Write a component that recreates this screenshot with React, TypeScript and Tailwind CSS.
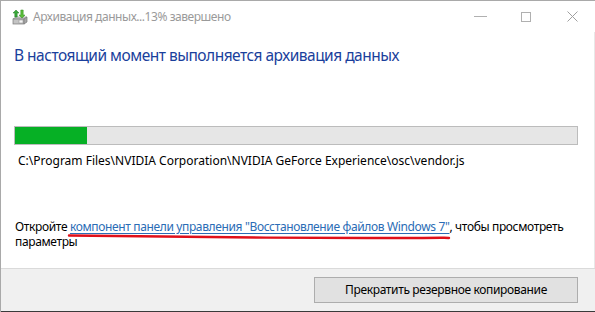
import React from 'react';

function BackupIcon() {
  return (
    <svg width="18" height="18" viewBox="0 0 18 18">
      {/* drive box */}
      <path d="M2 11 L5 9 L16 9 L13 11 Z" fill="#d8d8d8" stroke="#8a8a8a" strokeWidth="0.7" />
      <rect x="2" y="11" width="11" height="5" fill="#c4c4c4" stroke="#7a7a7a" strokeWidth="0.7" />
      <path d="M13 11 L16 9 L16 14 L13 16 Z" fill="#a8a8a8" stroke="#7a7a7a" strokeWidth="0.7" />
      <rect x="8" y="12" width="4" height="3" fill="#f4f4f4" stroke="#8a8a8a" strokeWidth="0.5" />
      {/* green arrows */}
      <path d="M5 2 L8 5 L6.2 5 L6.2 9 L3.8 9 L3.8 5 L2 5 Z" fill="#3aa83a" stroke="#1f7a1f" strokeWidth="0.5" />
      <path d="M11 10 L14 7 L12.2 7 L12.2 2 L9.8 2 L9.8 7 L8 7 Z" fill="#5cbf3a" stroke="#2c8a1f" strokeWidth="0.5" />
    </svg>
  );
}

function WindowControls() {
  return (
    <div className="flex items-center h-full">
      <div className="w-[46px] h-full flex items-center justify-center">
        <div className="w-[13px] h-px bg-[#b0b0b0]" />
      </div>
      <div className="w-[46px] h-full flex items-center justify-center">
        <div className="w-[10px] h-[10px] border border-[#b0b0b0]" />
      </div>
      <div className="w-[46px] h-full flex items-center justify-center">
        <svg width="11" height="11" viewBox="0 0 11 11">
          <path d="M0.5 0.5 L10.5 10.5 M10.5 0.5 L0.5 10.5" stroke="#a0a0a0" strokeWidth="1" />
        </svg>
      </div>
    </div>
  );
}

export default function App() {
  const progress = 12.8;
  return (
    <div
      className="w-[595px] h-[312px] bg-white border-t border-l border-[#a9a9a9] flex flex-col overflow-hidden text-[12px] text-black"
      style={{ fontFamily: '"Noto Sans", "Open Sans", sans-serif' }}
    >
      {/* Title bar */}
      <div className="h-[31px] flex items-center justify-between shrink-0">
        <div className="flex items-center pl-[10px] gap-[4px]">
          <BackupIcon />
          <span className="text-[#9a9a9a] text-[12px] tracking-[-0.45px]">Архивация данных...13% завершено</span>
        </div>
        <WindowControls />
      </div>

      {/* Content */}
      <div className="flex-1 flex flex-col pl-[13px] pr-[16px] border-r border-[#e8e8e8]">
        <h1 className="mt-[12px] text-[15.5px] leading-[22px] tracking-[-0.5px] text-[#1a3f9c] font-normal">
          В настоящий момент выполняется архивация данных
        </h1>

        <div className="mt-[60px] h-[19px] border border-[#bcbcbc] bg-[#e6e6e6]">
          <div className="h-full bg-[#06b025]" style={{ width: `${progress}%` }} />
        </div>

        <div className="mt-[8px] pl-[4px] leading-[16px]">
          C:\Program Files\NVIDIA Corporation\NVIDIA GeForce Experience\osc\vendor.js
        </div>

        <div className="relative mt-[50px] pl-[1px] leading-[15px] tracking-[-0.36px]">
          Откройте{' '}
          <span className="text-[#2a6cb5] underline underline-offset-[2px]">
            компонент панели управления "Восстановление файлов Windows 7"
          </span>
          , чтобы просмотреть параметры
          {/* red hand-drawn annotation */}
          <svg
            className="absolute left-[53px] top-[14px] pointer-events-none"
            width="386"
            height="8"
            viewBox="0 0 386 8"
          >
            <path
              d="M2 2.5 C 80 3.5, 200 5, 300 5 S 366 4.5, 382 5"
              fill="none"
              stroke="#e0101a"
              strokeWidth="2.4"
              strokeLinecap="round"
            />
          </svg>
        </div>
      </div>

      {/* Footer */}
      <div className="h-[44px] shrink-0 border-t border-[#dadada] bg-[#f0f0f0] flex items-center justify-end pr-[17px] border-b border-b-[#3a3a3a]">
        <button className="w-[264px] h-[26px] bg-[#e1e1e1] border border-[#adadad] text-[12px] text-black tracking-[-0.35px]">
          Прекратить резервное копирование
        </button>
      </div>
    </div>
  );
}
